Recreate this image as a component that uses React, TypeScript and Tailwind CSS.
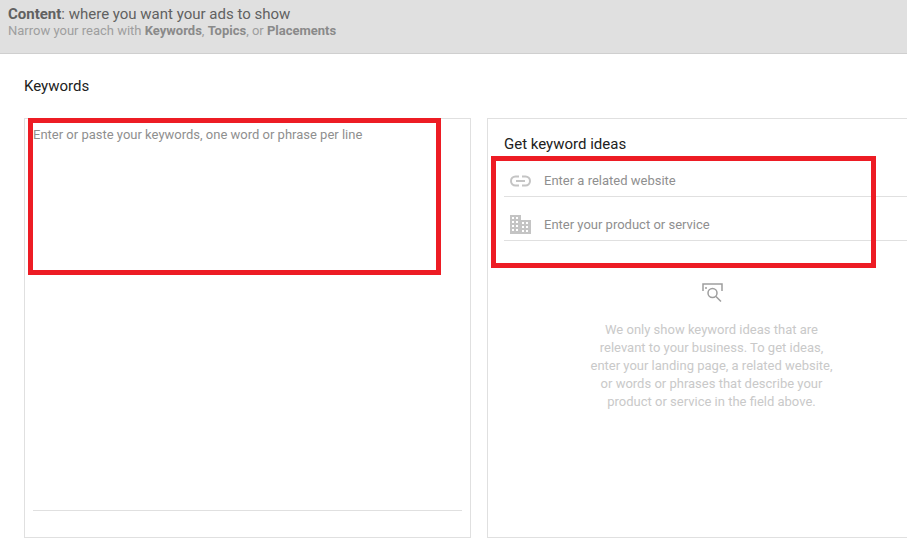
const font = { fontFamily: "Roboto, sans-serif" };

function LinkIcon() {
  return (
    <svg width="21" height="12" viewBox="0 0 21 12" fill="none" stroke="#c4c4c4" strokeWidth="2">
      <path d="M9 1.5H5.5a4.5 4.5 0 0 0 0 9H9" />
      <path d="M12 1.5h3.5a4.5 4.5 0 0 1 0 9H12" />
      <path d="M6 6h9" />
    </svg>
  );
}

function BuildingIcon() {
  return (
    <svg width="21" height="19" viewBox="0 0 21 19" fill="#c4c4c4">
      <path
        fillRule="evenodd"
        d="M0 0h11v5h10v14H0zM2 2v2h2V2zm4 0v2h2V2zM2 6v2h2V6zm4 0v2h2V6zM2 10v2h2v-2zm4 0v2h2v-2zM2 14v2h2v-2zm4 0v2h2v-2zm6-7v2h2V7zm4 0v2h2V7zm-4 4v2h2v-2zm4 0v2h2v-2zm-4 4v2h2v-2zm4 0v2h2v-2z"
      />
    </svg>
  );
}

function SearchPreviewIcon() {
  return (
    <svg className="ml-[2px]" width="21" height="20" viewBox="0 0 21 20" fill="none" stroke="#9e9e9e" strokeWidth="1.5">
      <path d="M1 8V1h19v7" />
      <path d="M4 4v2" />
      <circle cx="10.5" cy="10" r="4.5" />
      <path d="M14 13.5l5 5" />
    </svg>
  );
}

function IdeaInput({ icon, placeholder }: { icon: React.ReactNode; placeholder: string }) {
  return (
    <div className="flex h-11 items-center border-b border-[#e0e0e0] pt-3">
      <div className="flex w-10 shrink-0 justify-center pr-2">{icon}</div>
      <span className="text-[13px] text-[#8f8f8f]">{placeholder}</span>
    </div>
  );
}

export default function App() {
  return (
    <div className="relative h-[543px] w-[907px] overflow-hidden bg-white" style={font}>
      <header className="h-[54px] border-b border-[#cfcfcf] bg-[#e0e0e0] pl-2 pt-[5px]">
        <p className="text-[15px] leading-[18px] text-[#616161]">
          <b className="font-bold">Content</b>: where you want your ads to show
        </p>
        <p className="text-[13px] leading-[16px] text-[#9e9e9e]">
          Narrow your reach with <b className="font-bold text-[#8a8a8a]">Keywords</b>,{" "}
          <b className="font-bold text-[#8a8a8a]">Topics</b>, or{" "}
          <b className="font-bold text-[#8a8a8a]">Placements</b>
        </p>
      </header>

      <main className="pl-6 pt-[23px]">
        <h2 className="h-[18px] text-[15px] leading-[18px] text-[#212121]">Keywords</h2>

        <div className="mt-[23px] flex h-[420px] gap-4">
          <section className="flex w-[447px] shrink-0 flex-col border border-[#e0e0e0] px-2">
            <p className="flex-1 pt-2 text-[13px] leading-[16px] text-[#8f8f8f]">
              Enter or paste your keywords, one word or phrase per line
            </p>
            <div className="mb-[26px] border-b border-[#e0e0e0]" />
          </section>

          <section className="w-[500px] shrink-0 border border-[#e0e0e0] pl-4 pt-4">
            <h3 className="text-[15px] leading-[18px] text-[#212121]">Get keyword ideas</h3>
            <div>
              <IdeaInput icon={<LinkIcon />} placeholder="Enter a related website" />
              <IdeaInput icon={<BuildingIcon />} placeholder="Enter your product or service" />
            </div>
            <div className="ml-[77px] mt-[42px] flex w-[261px] flex-col items-center">
              <SearchPreviewIcon />
              <p className="mt-[18px] text-center text-[13px] leading-[18px] text-[#c9c9c9]">
                We only show keyword ideas that are
                <br />
                relevant to your business. To get ideas,
                <br />
                enter your landing page, a related website,
                <br />
                or words or phrases that describe your
                <br />
                product or service in the field above.
              </p>
            </div>
          </section>
        </div>
      </main>

      {/* red annotation boxes drawn over the screenshot */}
      <div className="absolute left-[28px] top-[118px] h-[157px] w-[413px] border-[5px] border-[#ed1c24]" />
      <div className="absolute left-[491px] top-[156px] h-[112px] w-[385px] border-[5px] border-[#ed1c24]" />
    </div>
  );
}
